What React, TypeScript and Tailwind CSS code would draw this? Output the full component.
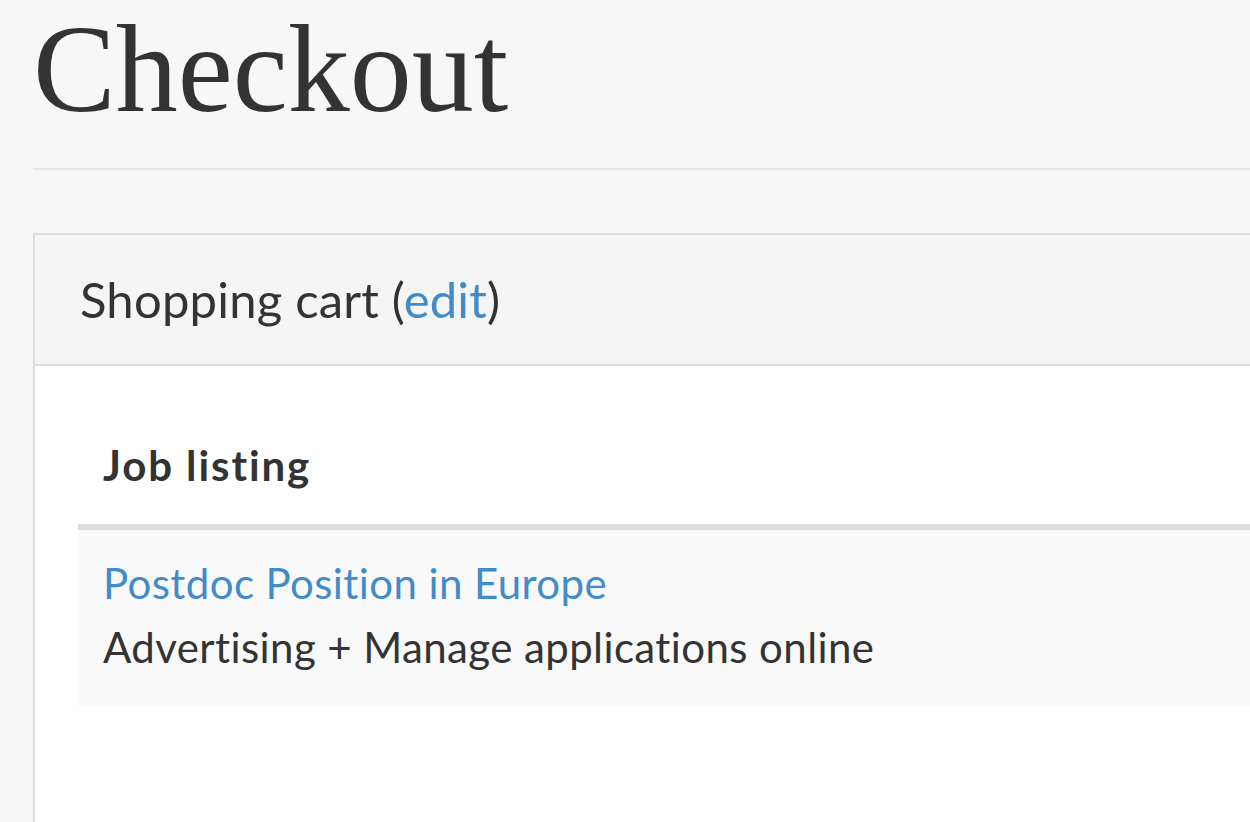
import React from "react";

export default function App() {
  return (
    <div className="w-[1250px] h-[822px] overflow-hidden bg-[#f7f7f7]">
      <div className="w-[1400px] pl-[33px]">
        <h1
          className="pt-[8px] text-[124px] leading-[124px] text-[#333333] font-normal"
          style={{ fontFamily: '"Liberation Serif", serif' }}
        >
          Checkout
        </h1>
        <div className="mt-[36px] border-t-2 border-[#e8e8e8]" />
        <div
          className="mt-[63px] border-2 border-[#dddddd] bg-white h-[700px]"
          style={{ fontFamily: 'Lato, "Open Sans", sans-serif' }}
        >
          <div className="h-[131px] flex items-center px-[45px] bg-[#f5f5f5] border-b-2 border-[#dddddd]">
            <span className="text-[49px] text-[#333333] tracking-[0.2px]">
              Shopping cart (<a className="text-[#428bca]">edit</a>)
            </span>
          </div>
          <div className="pl-[43px] pt-[44px]">
            <div className="pt-[23px] pb-[27px] pl-[25px] text-[42px] leading-[64px] font-bold tracking-[1.9px] text-[#333333] border-b-[6px] border-[#dddddd]">
              Job listing
            </div>
            <div className="bg-[#f9f9f9] pl-[25px] pt-[21px] pb-[27px] text-[42px] leading-[64px] tracking-[0.4px]">
              <div className="text-[#428bca]">Postdoc Position in Europe</div>
              <div className="text-[#333333]">Advertising + Manage applications online</div>
            </div>
          </div>
        </div>
      </div>
    </div>
  );
}
